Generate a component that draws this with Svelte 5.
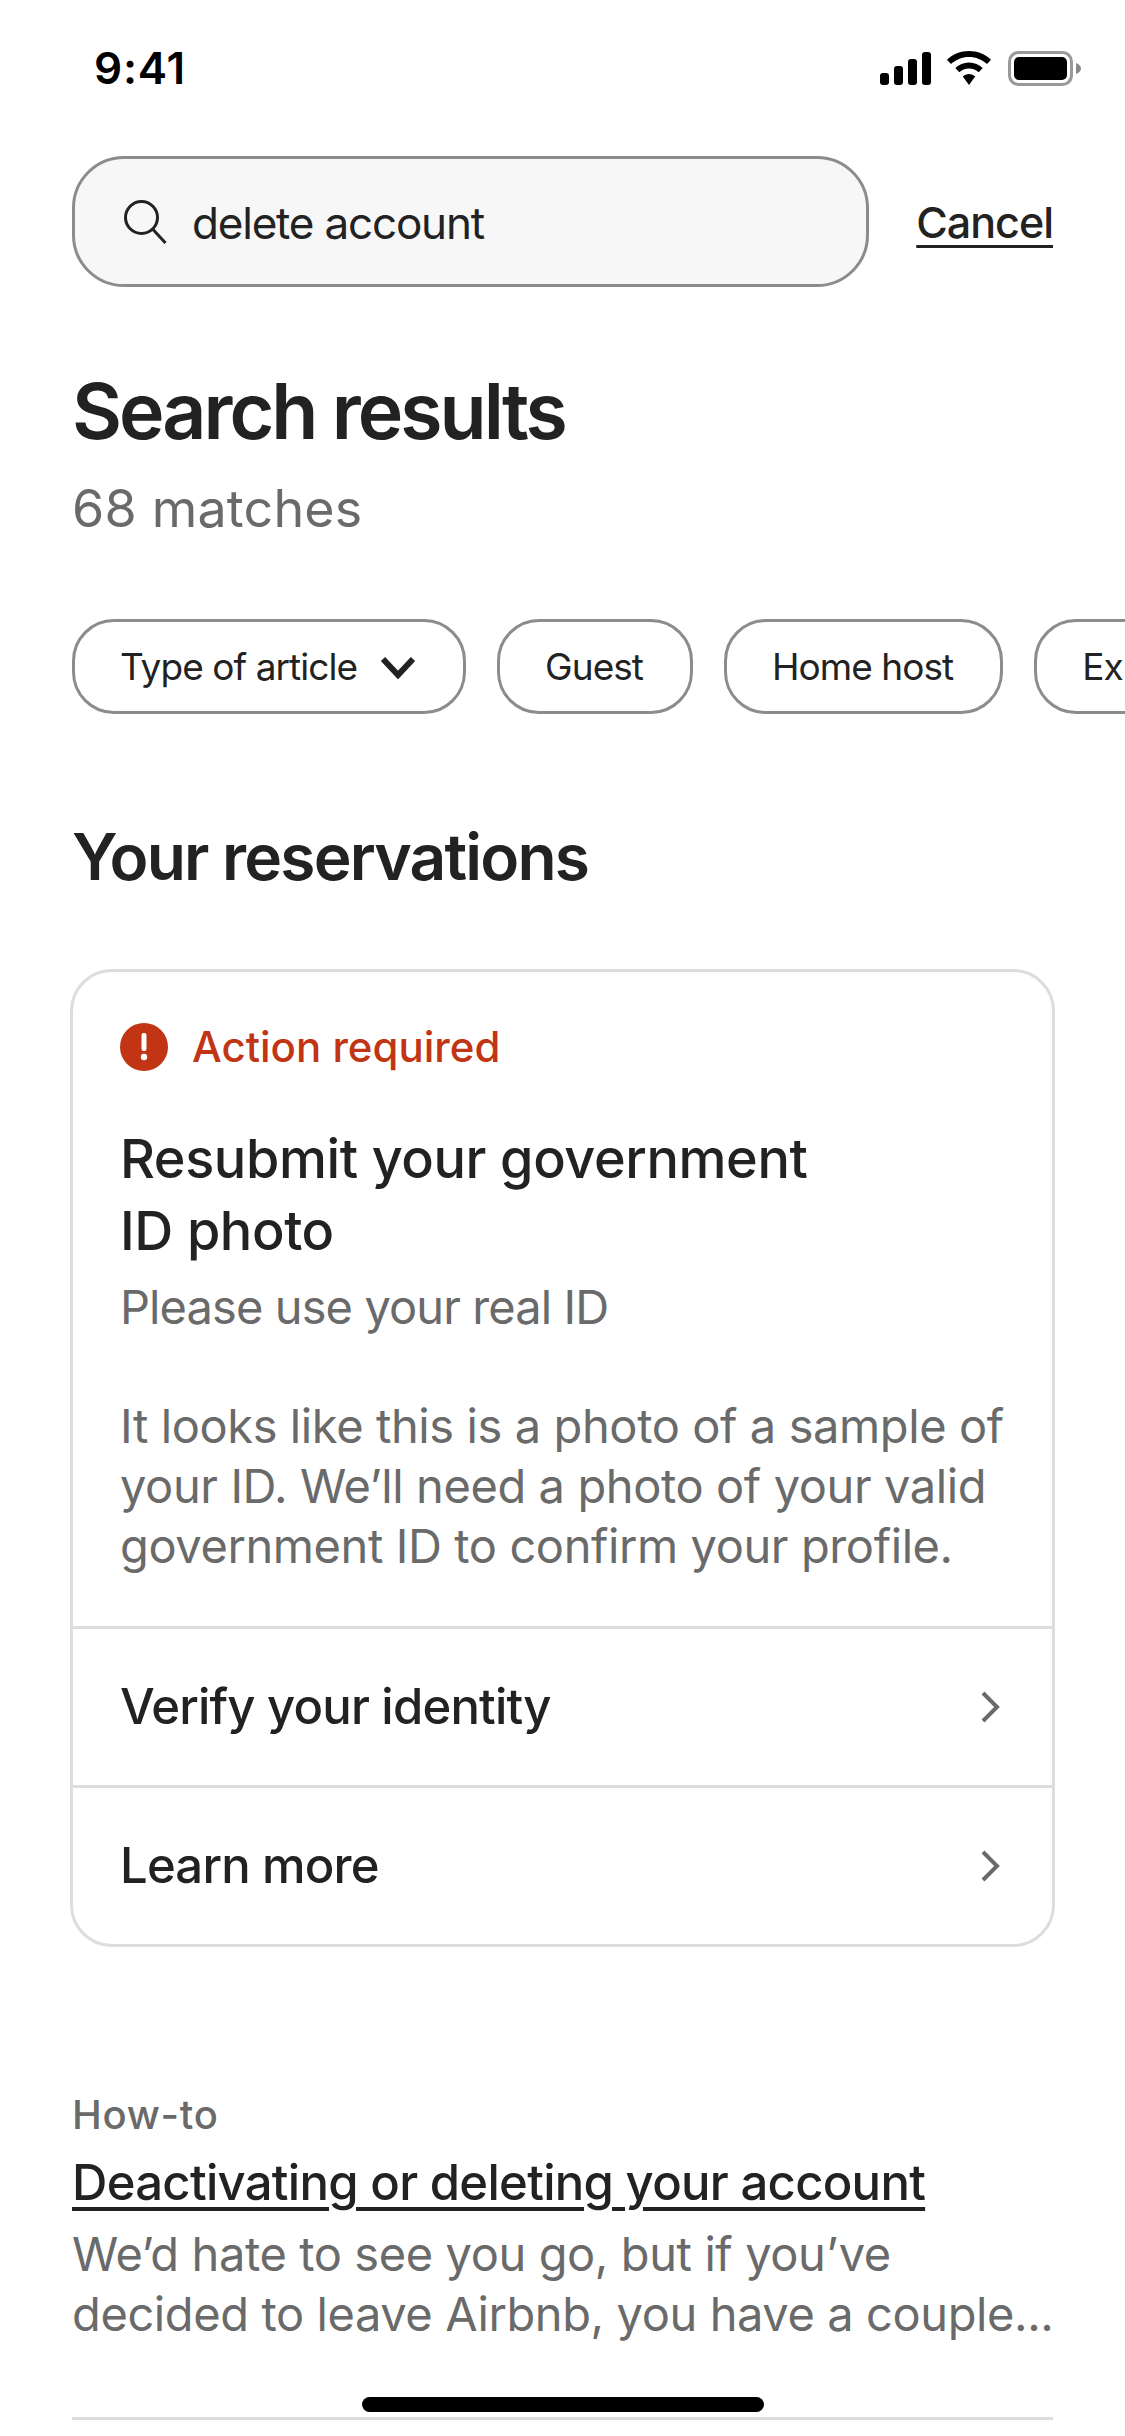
<script>
  const chips = ["Guest", "Home host", "Experience host"];
  const rows = ["Verify your identity", "Learn more"];
</script>

<div class="screen">
  <header class="status">
    <span class="time">9:41</span>
    <div class="status-icons">
      <svg width="51" height="33" viewBox="0 0 51 33">
        <rect x="0" y="21" width="9" height="12" rx="3" />
        <rect x="14" y="14" width="9" height="19" rx="3" />
        <rect x="28" y="7" width="9" height="26" rx="3" />
        <rect x="42" y="0" width="9" height="33" rx="3" />
      </svg>
      <svg class="wifi" width="46" height="34" viewBox="0 0 46 34">
        <path d="M23 0C14.500 0 6.800 3.300 1 8.700L5 13C9.700 8.600 16 5.900 23 5.900S36.300 8.600 41 13L45 8.700C39.200 3.300 31.500 0 23 0Z" />
        <path d="M23 11.500C17.700 11.500 12.900 13.600 9.300 17L13.300 21.300C15.800 18.900 19.200 17.400 23 17.400S30.200 18.900 32.700 21.300L36.700 17C33.100 13.600 28.300 11.500 23 11.500Z" />
        <path d="M23 23C20.600 23 18.500 23.900 16.800 25.400L23 34L29.200 25.400C27.500 23.900 25.400 23 23 23Z" />
      </svg>
      <svg class="battery" width="74" height="35" viewBox="0 0 74 35">
        <rect x="1.500" y="1.500" width="62" height="32" rx="9" fill="none" stroke="#999" stroke-width="3" />
        <rect x="6" y="6" width="53" height="23" rx="5" />
        <path d="M68 12C71 13 73 15 73 17.500S71 22 68 23Z" fill="#888" />
      </svg>
    </div>
  </header>

  <main class="content">
    <div class="search-row">
      <div class="search">
        <svg width="44" height="44" viewBox="0 0 44 44" fill="none" stroke="#222" stroke-width="3">
          <circle cx="18.500" cy="17.500" r="16" />
          <path d="M30 29.500L42.500 43" />
        </svg>
        <span class="query">delete account</span>
      </div>
      <span class="cancel">Cancel</span>
    </div>

    <h1>Search results</h1>
    <p class="count">68 matches</p>

    <div class="chips">
      <div class="chip">
        Type of article
        <svg width="36" height="24" viewBox="0 0 36 24" fill="none" stroke="#222" stroke-width="6">
          <path d="M3 4L18 20L33 4" />
        </svg>
      </div>
      {#each chips as chip}
        <div class="chip">{chip}</div>
      {/each}
    </div>

    <h2>Your reservations</h2>

    <section class="card">
      <div class="card-body">
        <div class="alert">
          <svg width="48" height="48" viewBox="0 0 48 48">
            <circle cx="24" cy="24" r="24" fill="#c13515" />
            <rect x="21.500" y="10" width="5" height="18" rx="2" fill="#fff" />
            <circle cx="24" cy="34" r="3.200" fill="#fff" />
          </svg>
          <span>Action required</span>
        </div>
        <h3>Resubmit your government<br />ID photo</h3>
        <p class="sub">Please use your real ID</p>
        <p class="desc">It looks like this is a photo of a sample of<br />your ID. We’ll need a photo of your valid<br />government ID to confirm your profile.</p>
      </div>
      {#each rows as row}
        <div class="row">
          <span>{row}</span>
          <svg width="20" height="32" viewBox="0 0 20 32" fill="none" stroke="#6a6a6a" stroke-width="4">
            <path d="M3 2L17 16L3 30" />
          </svg>
        </div>
      {/each}
    </section>

    <article class="article">
      <div class="kind">How-to</div>
      <div class="link">Deactivating or deleting your account</div>
      <p class="excerpt">We’d hate to see you go, but if you’ve<br />decided to leave Airbnb, you have a couple...</p>
    </article>
    <hr />
  </main>

  <div class="home-bar"></div>
</div>

<style>
  :global(body) {
    margin: 0;
    background: #fff;
  }
  .screen {
    position: relative;
    width: 1125px;
    height: 2436px;
    overflow: hidden;
    background: #fff;
    color: #222;
    font-family: Inter, "Liberation Sans", sans-serif;
  }
  .status {
    display: flex;
    justify-content: space-between;
    align-items: center;
    height: 136px;
    padding: 0 43px 0 94px;
  }
  .time {
    color: #000;
    font-size: 44px;
    font-weight: 600;
    letter-spacing: 0.8px;
  }
  .status-icons {
    display: flex;
    align-items: center;
    gap: 15px;
  }
  .status-icons .battery {
    margin-left: 1px;
  }
  .content {
    padding: 20px 72px 0;
  }
  .search-row {
    display: flex;
    align-items: center;
    justify-content: space-between;
  }
  .search {
    display: flex;
    align-items: center;
    gap: 25px;
    box-sizing: border-box;
    width: 797px;
    height: 131px;
    padding: 0 48px;
    background: #f7f7f7;
    border: 3px solid #8c8c8c;
    border-radius: 52px;
    font-size: 44px;
    letter-spacing: -1.2px;
  }
  .query {
    padding-top: 2px;
  }
  .cancel {
    font-size: 43px;
    font-weight: 500;
    letter-spacing: -1px;
    text-decoration: underline;
    text-decoration-thickness: 3px;
    text-underline-offset: 7px;
  }
  h1 {
    margin: 79px 0 0;
    font-size: 77px;
    line-height: 90px;
    font-weight: 600;
    letter-spacing: -3px;
  }
  .count {
    margin: 23px 0 0;
    font-size: 52px;
    line-height: 60px;
    color: #6a6a6a;
    letter-spacing: 0.2px;
  }
  .chips {
    display: flex;
    gap: 31px;
    margin-top: 80px;
    margin-right: -72px;
    white-space: nowrap;
  }
  .chip {
    display: flex;
    align-items: center;
    gap: 23px;
    flex: none;
    box-sizing: border-box;
    height: 95px;
    padding: 0 47px 0 45px;
    border: 3px solid #8c8c8c;
    border-radius: 42px;
    font-size: 37px;
    letter-spacing: -0.95px;
  }
  h2 {
    margin: 104px 0 0;
    font-size: 64px;
    line-height: 78px;
    font-weight: 600;
    letter-spacing: -1.8px;
  }
  .card {
    margin: 73px -2px 0;
    border: 3px solid #ddd;
    border-radius: 42px;
  }
  .card-body {
    padding: 49px 48px 50px 47px;
  }
  .alert {
    display: flex;
    align-items: center;
    gap: 24px;
    color: #c13515;
    font-size: 42px;
    font-weight: 500;
  }
  h3 {
    margin: 51px 0 0;
    font-size: 54px;
    line-height: 72px;
    font-weight: 550;
    letter-spacing: -0.4px;
  }
  .sub,
  .desc {
    margin: 0;
    font-size: 47px;
    line-height: 60px;
    color: #6a6a6a;
  }
  .sub {
    margin-top: 10px;
    letter-spacing: -0.9px;
  }
  .desc {
    margin-top: 59px;
    letter-spacing: -0.4px;
  }
  .row {
    display: flex;
    align-items: center;
    justify-content: space-between;
    height: 156px;
    padding: 0 52px 0 47px;
    border-top: 3px solid #ddd;
    font-size: 49px;
    font-weight: 550;
    letter-spacing: -0.8px;
  }
  .row span {
    padding-bottom: 2px;
  }
  .article {
    margin-top: 143px;
  }
  .kind {
    font-size: 40px;
    line-height: 50px;
    font-weight: 500;
    color: #6a6a6a;
    letter-spacing: 0.7px;
  }
  .link {
    margin-top: 13px;
    font-size: 49px;
    line-height: 60px;
    font-weight: 550;
    letter-spacing: -0.7px;
    text-decoration: underline;
    text-decoration-thickness: 4px;
    text-underline-offset: 7px;
  }
  .excerpt {
    margin: 11px 0 0;
    font-size: 47px;
    line-height: 60px;
    color: #6a6a6a;
    letter-spacing: -0.4px;
    white-space: nowrap;
  }
  hr {
    margin: 73px 0 0;
    border: 0;
    border-top: 3px solid #ddd;
  }
  .home-bar {
    position: absolute;
    left: 362px;
    top: 2397px;
    width: 402px;
    height: 15px;
    border-radius: 8px;
    background: #000;
  }
</style>
